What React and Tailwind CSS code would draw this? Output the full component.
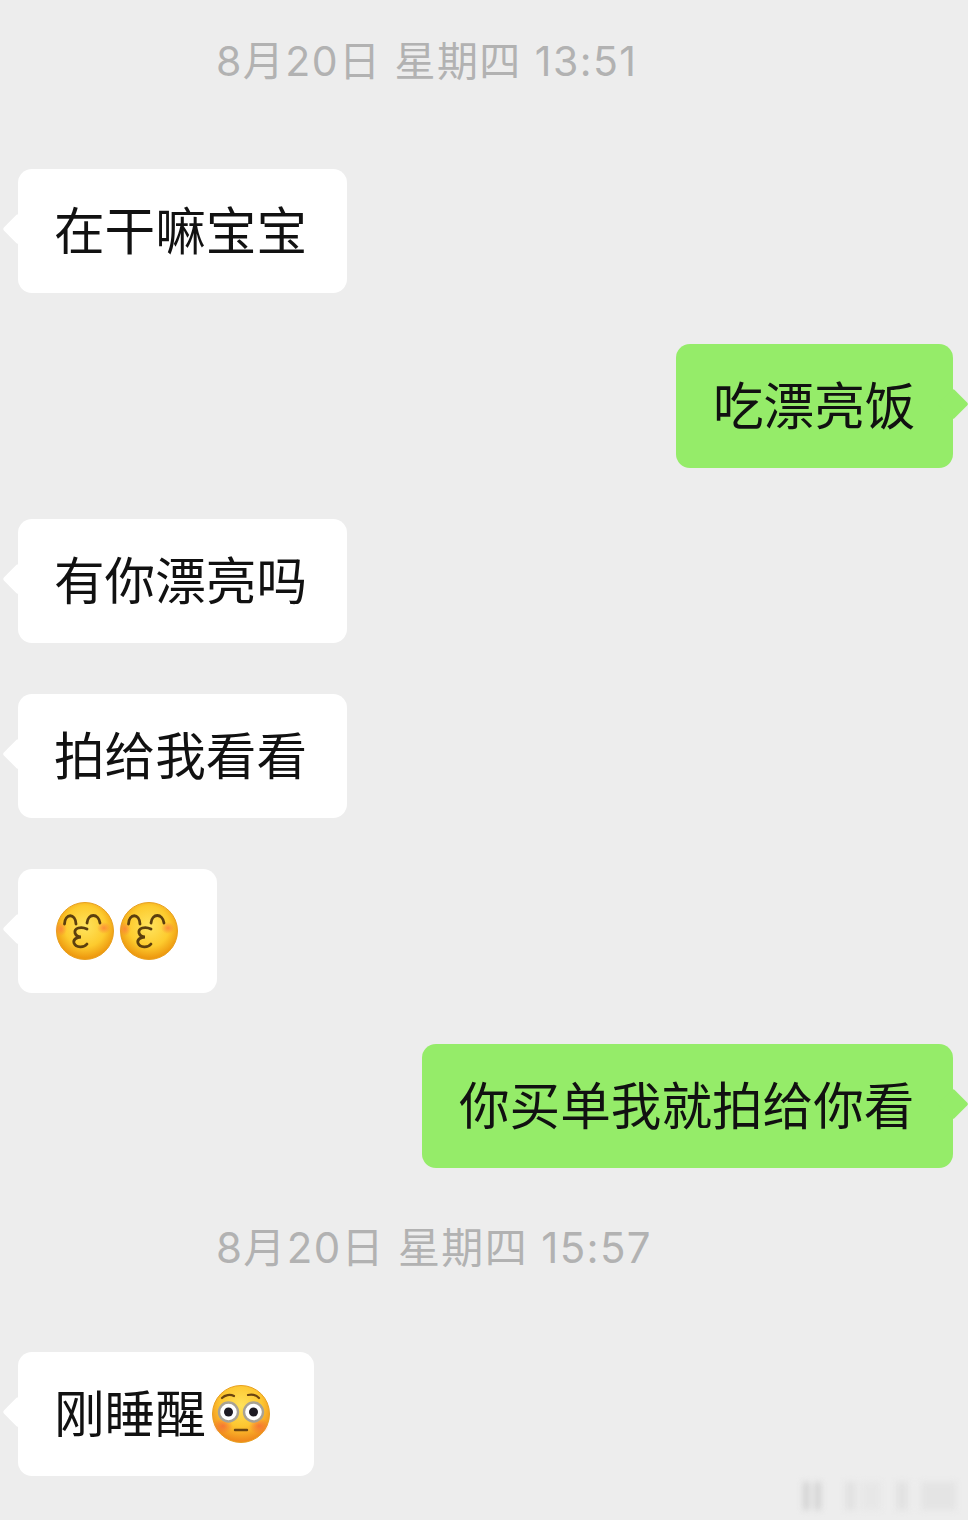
import React from 'react';

const KissEmoji = ({ id }) => (
  <svg width="60" height="60" viewBox="0 0 60 60" className="shrink-0">
    <defs>
      <radialGradient id={id} cx="50%" cy="42%" r="55%">
        <stop offset="0%" stopColor="#ffe45e" />
        <stop offset="65%" stopColor="#fdcb2e" />
        <stop offset="100%" stopColor="#ee9a10" />
      </radialGradient>
      <radialGradient id={`${id}-blush`}>
        <stop offset="0%" stopColor="#fb7f3c" stopOpacity="0.8" />
        <stop offset="100%" stopColor="#fb7f3c" stopOpacity="0" />
      </radialGradient>
    </defs>
    <circle cx="30" cy="30" r="28.5" fill={`url(#${id})`} stroke="#e8a020" strokeWidth="1" />
    <ellipse cx="6" cy="28" rx="6" ry="7" fill={`url(#${id}-blush)`} />
    <ellipse cx="49" cy="27" rx="7" ry="6" fill={`url(#${id}-blush)`} />
    <path d="M9.5 23C10 12 20.5 12 21 23" fill="none" stroke="#5c3f0e" strokeWidth="2.8" strokeLinecap="round" />
    <path d="M32 22C33 12 43.5 12 45 22" fill="none" stroke="#5c3f0e" strokeWidth="2.8" strokeLinecap="round" />
    <path d="M32 28C26 25 19 27 20 32 21 35 23 36 26 36 21 36 18 39 19 42 21 47 29 47 32 43" fill="none" stroke="#5c3f0e" strokeWidth="2.8" strokeLinecap="round" />
  </svg>
);

const FlushedEmoji = () => (
  <svg width="60" height="60" viewBox="0 0 60 60" className="shrink-0">
    <defs>
      <radialGradient id="flush-face" cx="50%" cy="35%" r="62%">
        <stop offset="0%" stopColor="#ffe25a" />
        <stop offset="60%" stopColor="#fdc630" />
        <stop offset="100%" stopColor="#f08a1c" />
      </radialGradient>
      <radialGradient id="flush-blush">
        <stop offset="0%" stopColor="#f5603a" stopOpacity="0.7" />
        <stop offset="100%" stopColor="#f5603a" stopOpacity="0" />
      </radialGradient>
    </defs>
    <circle cx="30" cy="30" r="28.5" fill="url(#flush-face)" stroke="#e8a020" strokeWidth="1" />
    <ellipse cx="12" cy="42" rx="10" ry="8" fill="url(#flush-blush)" />
    <ellipse cx="48" cy="42" rx="10" ry="8" fill="url(#flush-blush)" />
    <path d="M11 14c3-3 8-4 12-2" fill="none" stroke="#6b4410" strokeWidth="2.2" strokeLinecap="round" />
    <path d="M37 11c4-1 8 0 11 3" fill="none" stroke="#6b4410" strokeWidth="2.2" strokeLinecap="round" />
    <circle cx="17.5" cy="28" r="9.5" fill="#fff" stroke="#a8a294" strokeWidth="2.4" />
    <circle cx="42.5" cy="28" r="9.5" fill="#fff" stroke="#a8a294" strokeWidth="2.4" />
    <circle cx="17.5" cy="28" r="4.5" fill="#1d1a22" />
    <circle cx="42.5" cy="28" r="4.5" fill="#1d1a22" />
    <path d="M24 46h12" stroke="#6b4410" strokeWidth="2.4" strokeLinecap="round" />
  </svg>
);

const Time = ({ children, className }) => (
  <div className={`h-[122px] pl-[216px] flex items-center text-[#b2b2b2] font-['Inter','Noto_Sans_CJK_SC',sans-serif] ${className}`}>
    {children}
  </div>
);

const Left = ({ children, width = 'w-[329px]', className = 'mt-[51px]' }) => (
  <div className={`relative ml-[18px] h-[124px] ${width} ${className} bg-white rounded-[14px] pl-[36px] flex items-center`}>
    <span className="absolute left-[-11px] top-[49px] w-[22px] h-[22px] rotate-45 bg-white rounded-[2px]"></span>
    <span className="relative flex items-center">{children}</span>
  </div>
);

const Right = ({ children, width }) => (
  <div className={`relative ml-auto mr-[15px] mt-[51px] h-[124px] ${width} bg-[#95ec69] rounded-[14px] pl-[37px] flex items-center`}>
    <span className="absolute right-[-11px] top-[49px] w-[22px] h-[22px] rotate-45 bg-[#95ec69] rounded-[2px]"></span>
    <span className="relative pb-[6px]">{children}</span>
  </div>
);

export default function App() {
  return (
    <div
      className="relative w-[968px] h-[1520px] overflow-hidden bg-[#ededed] text-[50.6px] leading-none text-[#111111]"
      style={{ fontFamily: '"Noto Sans CJK SC", "Noto Sans", sans-serif' }}
    >
      <Time className="text-[41px] tracking-[1.45px]">8月20日 星期四 13:51</Time>
      <Left className="mt-[47px]"><span className="pb-[6px]">在干嘛宝宝</span></Left>
      <Right width="w-[277px]">吃漂亮饭</Right>
      <Left><span className="pb-[6px]">有你漂亮吗</span></Left>
      <Left><span className="pb-[6px]">拍给我看看</span></Left>
      <Left width="w-[199px]">
        <span className="ml-[1px] flex gap-[4px]">
          <KissEmoji id="kiss-a" />
          <KissEmoji id="kiss-b" />
        </span>
      </Left>
      <Right width="w-[531px]">你买单我就拍给你看</Right>
      <Time className="mt-[19px] text-[42px] tracking-[1.35px]">8月20日 星期四 15:57</Time>
      <Left width="w-[296px]" className="mt-[43px]">
        <span className="pb-[6px]">刚睡醒</span>
        <span className="ml-[5px]">
          <FlushedEmoji />
        </span>
      </Left>

      {/* faded watermark, bottom right */}
      <div className="absolute left-[803px] top-[1482px] flex h-[28px] w-[155px] items-stretch blur-[3px]">
        <span className="w-[7px] bg-[#d2d2d2]"></span>
        <span className="w-[4px] bg-[#f4f4f4]"></span>
        <span className="w-[7px] bg-[#d2d2d2]"></span>
        <span className="ml-[24px] w-[11px] bg-[#e2e2e2]"></span>
        <span className="ml-[5px] w-[20px] bg-[#e7e7e7]"></span>
        <span className="ml-[15px] w-[12px] bg-[#e2e2e2]"></span>
        <span className="ml-[13px] w-[35px] bg-[#e4e4e4]"></span>
      </div>
    </div>
  );
}
